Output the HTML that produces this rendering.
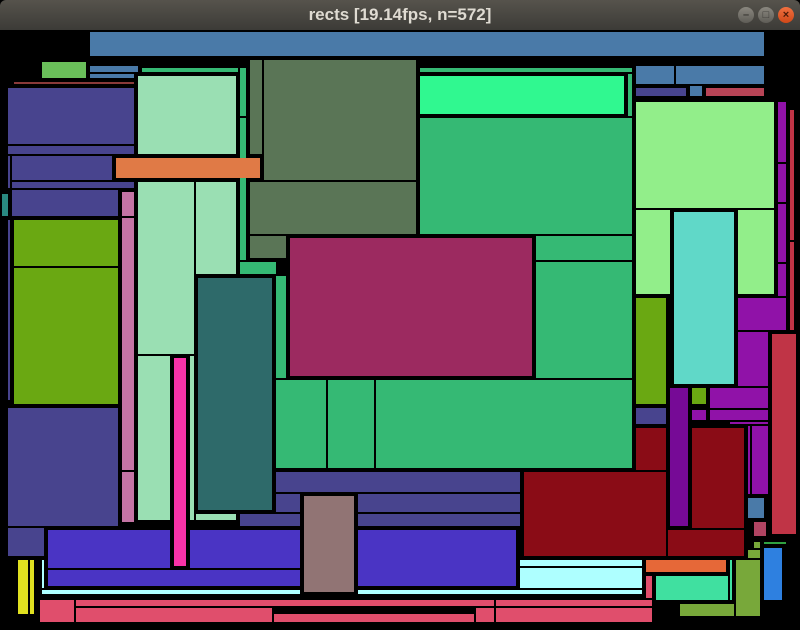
<!DOCTYPE html>
<html><head><meta charset="utf-8"><style>
*{margin:0;padding:0}
body{width:800px;height:630px;background:#000;position:relative;overflow:hidden}
.t{position:absolute;left:0;top:0;width:800px;height:30px;background:linear-gradient(#56534c,#3c3b37);border-radius:6px 6px 0 0}
.t span{position:absolute;left:0;width:800px;top:5px;text-align:center;font:bold 17px "Liberation Sans",sans-serif;color:#dfdbd2}
.b{position:absolute;top:7px;width:16px;height:16px;border-radius:50%;background:linear-gradient(#8a877f,#5f5d57);color:#3a3935;font:bold 11px "Liberation Sans",sans-serif;text-align:center;line-height:16px}
div.r{position:absolute}
</style></head><body>
<div class="t"><span>rects [19.14fps, n=572]</span>
<div class="b" style="left:738px">–</div><div class="b" style="left:758px">□</div><div class="b" style="left:778px;background:linear-gradient(#f07040,#d04818);color:#4a1a08">×</div></div>

<div class="r" style="left:90px;top:32px;width:674px;height:24px;background:#4a7aa8"></div>
<div class="r" style="left:42px;top:62px;width:44px;height:16px;background:#6abf5a"></div>
<div class="r" style="left:90px;top:66px;width:48px;height:6px;background:#4a7aa8"></div>
<div class="r" style="left:90px;top:74px;width:44px;height:4px;background:#4a7aa8"></div>
<div class="r" style="left:14px;top:82px;width:120px;height:2px;background:#8a3a3a"></div>
<div class="r" style="left:8px;top:88px;width:126px;height:56px;background:#48448e"></div>
<div class="r" style="left:8px;top:146px;width:126px;height:8px;background:#48448e"></div>
<div class="r" style="left:8px;top:156px;width:2px;height:32px;background:#48448e"></div>
<div class="r" style="left:12px;top:156px;width:100px;height:24px;background:#48448e"></div>
<div class="r" style="left:12px;top:182px;width:122px;height:6px;background:#48448e"></div>
<div class="r" style="left:2px;top:194px;width:6px;height:22px;background:#2a8a80"></div>
<div class="r" style="left:12px;top:190px;width:106px;height:26px;background:#48448e"></div>
<div class="r" style="left:8px;top:220px;width:2px;height:180px;background:#48448e"></div>
<div class="r" style="left:122px;top:192px;width:12px;height:24px;background:#c474a4"></div>
<div class="r" style="left:122px;top:218px;width:12px;height:252px;background:#c474a4"></div>
<div class="r" style="left:122px;top:472px;width:12px;height:50px;background:#c474a4"></div>
<div class="r" style="left:14px;top:220px;width:104px;height:46px;background:#6aa812"></div>
<div class="r" style="left:14px;top:268px;width:104px;height:136px;background:#6aa812"></div>
<div class="r" style="left:8px;top:408px;width:110px;height:118px;background:#48448e"></div>
<div class="r" style="left:138px;top:76px;width:98px;height:78px;background:#9adfb3"></div>
<div class="r" style="left:138px;top:182px;width:56px;height:172px;background:#9adfb3"></div>
<div class="r" style="left:138px;top:356px;width:32px;height:164px;background:#9adfb3"></div>
<div class="r" style="left:190px;top:356px;width:4px;height:164px;background:#9adfb3"></div>
<div class="r" style="left:196px;top:182px;width:40px;height:92px;background:#9adfb3"></div>
<div class="r" style="left:196px;top:514px;width:40px;height:6px;background:#9adfb3"></div>
<div class="r" style="left:142px;top:68px;width:96px;height:4px;background:#35b974"></div>
<div class="r" style="left:240px;top:68px;width:6px;height:48px;background:#35b974"></div>
<div class="r" style="left:240px;top:118px;width:6px;height:142px;background:#35b974"></div>
<div class="r" style="left:240px;top:262px;width:36px;height:12px;background:#35b974"></div>
<div class="r" style="left:276px;top:276px;width:10px;height:102px;background:#35b974"></div>
<div class="r" style="left:116px;top:158px;width:144px;height:20px;background:#e07a46"></div>
<div class="r" style="left:250px;top:60px;width:12px;height:94px;background:#5a7556"></div>
<div class="r" style="left:264px;top:60px;width:152px;height:120px;background:#5a7556"></div>
<div class="r" style="left:250px;top:182px;width:166px;height:52px;background:#5a7556"></div>
<div class="r" style="left:250px;top:236px;width:36px;height:22px;background:#5a7556"></div>
<div class="r" style="left:290px;top:238px;width:242px;height:138px;background:#9c2a60"></div>
<div class="r" style="left:198px;top:278px;width:74px;height:232px;background:#2e6a6a"></div>
<div class="r" style="left:420px;top:68px;width:212px;height:4px;background:#35b974"></div>
<div class="r" style="left:420px;top:76px;width:204px;height:38px;background:#30f890"></div>
<div class="r" style="left:628px;top:74px;width:4px;height:42px;background:#35b974"></div>
<div class="r" style="left:420px;top:118px;width:212px;height:116px;background:#35b974"></div>
<div class="r" style="left:536px;top:236px;width:96px;height:24px;background:#35b974"></div>
<div class="r" style="left:536px;top:262px;width:96px;height:116px;background:#35b974"></div>
<div class="r" style="left:276px;top:380px;width:50px;height:88px;background:#35b974"></div>
<div class="r" style="left:328px;top:380px;width:46px;height:88px;background:#35b974"></div>
<div class="r" style="left:376px;top:380px;width:256px;height:88px;background:#35b974"></div>
<div class="r" style="left:276px;top:472px;width:244px;height:20px;background:#48448e"></div>
<div class="r" style="left:276px;top:494px;width:24px;height:18px;background:#48448e"></div>
<div class="r" style="left:358px;top:494px;width:162px;height:18px;background:#48448e"></div>
<div class="r" style="left:240px;top:514px;width:60px;height:12px;background:#48448e"></div>
<div class="r" style="left:358px;top:514px;width:162px;height:12px;background:#48448e"></div>
<div class="r" style="left:304px;top:496px;width:50px;height:96px;background:#917474"></div>
<div class="r" style="left:48px;top:530px;width:122px;height:38px;background:#4a34c4"></div>
<div class="r" style="left:190px;top:530px;width:110px;height:38px;background:#4a34c4"></div>
<div class="r" style="left:48px;top:570px;width:252px;height:16px;background:#4a34c4"></div>
<div class="r" style="left:358px;top:530px;width:158px;height:56px;background:#4a34c4"></div>
<div class="r" style="left:174px;top:358px;width:12px;height:208px;background:#f832a8"></div>
<div class="r" style="left:8px;top:528px;width:36px;height:28px;background:#48448e"></div>
<div class="r" style="left:42px;top:560px;width:2px;height:28px;background:#aeffff"></div>
<div class="r" style="left:42px;top:590px;width:258px;height:4px;background:#aeffff"></div>
<div class="r" style="left:358px;top:590px;width:284px;height:4px;background:#aeffff"></div>
<div class="r" style="left:520px;top:560px;width:122px;height:6px;background:#aeffff"></div>
<div class="r" style="left:520px;top:568px;width:122px;height:20px;background:#aeffff"></div>
<div class="r" style="left:18px;top:560px;width:10px;height:54px;background:#e0e020"></div>
<div class="r" style="left:30px;top:560px;width:4px;height:54px;background:#e0e020"></div>
<div class="r" style="left:40px;top:600px;width:34px;height:22px;background:#e04e6c"></div>
<div class="r" style="left:76px;top:600px;width:418px;height:6px;background:#e04e6c"></div>
<div class="r" style="left:496px;top:600px;width:156px;height:6px;background:#e04e6c"></div>
<div class="r" style="left:76px;top:608px;width:196px;height:14px;background:#e04e6c"></div>
<div class="r" style="left:274px;top:614px;width:200px;height:8px;background:#e04e6c"></div>
<div class="r" style="left:476px;top:608px;width:18px;height:14px;background:#e04e6c"></div>
<div class="r" style="left:496px;top:608px;width:156px;height:14px;background:#e04e6c"></div>
<div class="r" style="left:524px;top:472px;width:142px;height:84px;background:#8a0c16"></div>
<div class="r" style="left:636px;top:428px;width:30px;height:42px;background:#8a0c16"></div>
<div class="r" style="left:692px;top:428px;width:52px;height:100px;background:#8a0c16"></div>
<div class="r" style="left:668px;top:530px;width:76px;height:26px;background:#8a0c16"></div>
<div class="r" style="left:670px;top:388px;width:18px;height:138px;background:#760a96"></div>
<div class="r" style="left:778px;top:102px;width:8px;height:60px;background:#9012a8"></div>
<div class="r" style="left:778px;top:164px;width:8px;height:38px;background:#9012a8"></div>
<div class="r" style="left:778px;top:204px;width:8px;height:58px;background:#9012a8"></div>
<div class="r" style="left:778px;top:264px;width:8px;height:32px;background:#9012a8"></div>
<div class="r" style="left:790px;top:110px;width:4px;height:130px;background:#c03446"></div>
<div class="r" style="left:790px;top:242px;width:4px;height:88px;background:#c03446"></div>
<div class="r" style="left:772px;top:334px;width:24px;height:200px;background:#c03446"></div>
<div class="r" style="left:636px;top:102px;width:138px;height:106px;background:#92ee8a"></div>
<div class="r" style="left:636px;top:210px;width:34px;height:84px;background:#92ee8a"></div>
<div class="r" style="left:738px;top:210px;width:36px;height:84px;background:#92ee8a"></div>
<div class="r" style="left:674px;top:212px;width:60px;height:172px;background:#60d8c8"></div>
<div class="r" style="left:636px;top:298px;width:30px;height:106px;background:#6aa812"></div>
<div class="r" style="left:692px;top:388px;width:14px;height:16px;background:#6aa812"></div>
<div class="r" style="left:738px;top:298px;width:48px;height:32px;background:#9012a8"></div>
<div class="r" style="left:738px;top:332px;width:30px;height:54px;background:#9012a8"></div>
<div class="r" style="left:710px;top:388px;width:58px;height:20px;background:#9012a8"></div>
<div class="r" style="left:692px;top:410px;width:14px;height:10px;background:#9012a8"></div>
<div class="r" style="left:710px;top:410px;width:58px;height:10px;background:#9012a8"></div>
<div class="r" style="left:730px;top:422px;width:38px;height:2px;background:#9012a8"></div>
<div class="r" style="left:752px;top:426px;width:16px;height:68px;background:#9012a8"></div>
<div class="r" style="left:748px;top:426px;width:2px;height:68px;background:#9012a8"></div>
<div class="r" style="left:636px;top:408px;width:30px;height:16px;background:#48448e"></div>
<div class="r" style="left:748px;top:498px;width:16px;height:20px;background:#4a7aa8"></div>
<div class="r" style="left:754px;top:522px;width:12px;height:14px;background:#b04462"></div>
<div class="r" style="left:754px;top:542px;width:6px;height:6px;background:#78a83a"></div>
<div class="r" style="left:748px;top:550px;width:12px;height:8px;background:#78a83a"></div>
<div class="r" style="left:764px;top:542px;width:22px;height:2px;background:#30a040"></div>
<div class="r" style="left:764px;top:548px;width:18px;height:52px;background:#2e80e0"></div>
<div class="r" style="left:646px;top:560px;width:80px;height:12px;background:#e66838"></div>
<div class="r" style="left:646px;top:576px;width:6px;height:22px;background:#e04e6c"></div>
<div class="r" style="left:656px;top:576px;width:72px;height:24px;background:#40e0a0"></div>
<div class="r" style="left:730px;top:560px;width:2px;height:40px;background:#40e0a0"></div>
<div class="r" style="left:736px;top:560px;width:24px;height:56px;background:#78a83a"></div>
<div class="r" style="left:680px;top:604px;width:54px;height:12px;background:#78a83a"></div>
<div class="r" style="left:636px;top:66px;width:38px;height:18px;background:#4a7aa8"></div>
<div class="r" style="left:676px;top:66px;width:88px;height:18px;background:#4a7aa8"></div>
<div class="r" style="left:636px;top:88px;width:50px;height:8px;background:#48448e"></div>
<div class="r" style="left:690px;top:86px;width:12px;height:10px;background:#4a7aa8"></div>
<div class="r" style="left:706px;top:88px;width:58px;height:8px;background:#b84456"></div>
</body></html>
